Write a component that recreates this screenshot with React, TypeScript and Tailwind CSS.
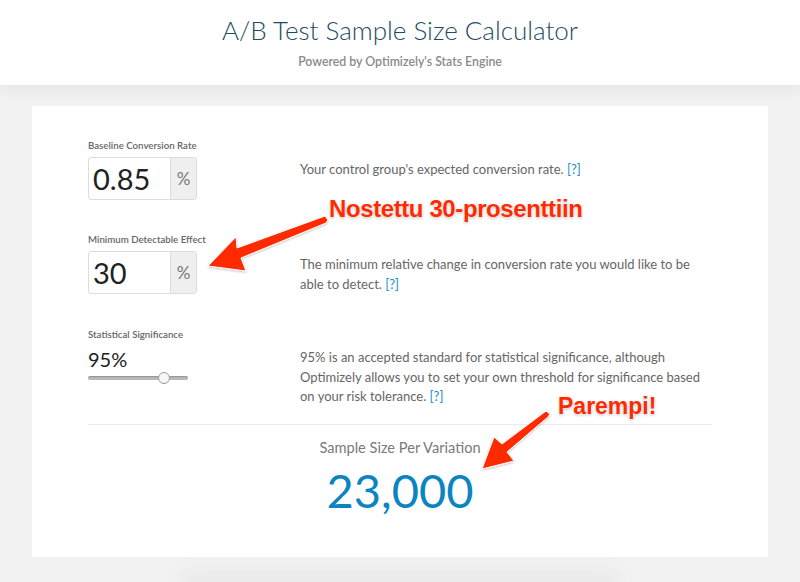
import React from "react";

const Help = () => <span className="text-[#1a8cc9]">[?]</span>;

const PercentInput = ({ value }: { value: string }) => (
  <div className="flex h-[43px] w-[109px] rounded-[3px] border border-[#dcdcdc] overflow-hidden">
    <div className="flex w-[81px] items-center pl-[4px] text-[29px] text-[#222]">{value}</div>
    <div className="flex flex-1 items-center justify-center border-l border-[#dcdcdc] bg-[#efefef] text-[17px] text-[#777]">
      %
    </div>
  </div>
);

const Label = ({ children }: { children: React.ReactNode }) => (
  <div className="text-[9.7px] leading-[11px] font-semibold text-[#666]">{children}</div>
);

export default function App() {
  return (
    <div className="relative min-h-[582px] w-full overflow-hidden bg-[#f2f2f2] font-['Lato',sans-serif]">
      <header className="relative z-10 flex h-[85px] flex-col items-center bg-white shadow-[0_4px_14px_rgba(0,0,0,0.06)]">
        <h1 className="mt-[15px] text-[26px] leading-[31px] font-light text-[#1d4c62]">
          A/B Test Sample Size Calculator
        </h1>
        <p className="mt-[9px] text-[12.3px] leading-[14px] font-semibold text-[#8a8a8a]">
          Powered by Optimizely's Stats Engine
        </p>
      </header>

      <main className="mx-[32px] mt-[21px] h-[451px] bg-white px-[56px] pt-[34px]">
        <div className="flex">
          <div className="w-[212px]">
            <Label>Baseline Conversion Rate</Label>
            <div className="mt-[6px]">
              <PercentInput value="0.85" />
            </div>
          </div>
          <p className="pt-[19px] text-[13px] leading-[20px] text-[#666]">
            Your control group's expected conversion rate. <Help />
          </p>
        </div>

        <div className="mt-[34px] flex">
          <div className="w-[212px]">
            <Label>Minimum Detectable Effect</Label>
            <div className="mt-[6px]">
              <PercentInput value="30" />
            </div>
          </div>
          <p className="pt-[20px] text-[13px] leading-[20px] text-[#666]">
            The minimum relative change in conversion rate you would like to be
            <br />
            able to detect. <Help />
          </p>
        </div>

        <div className="mt-[35px] flex">
          <div className="w-[212px]">
            <Label>Statistical Significance</Label>
            <div className="mt-[7px] text-[20px] leading-[24px] text-[#222]">95%</div>
            <div className="relative mt-[1px] h-[12px] w-[100px]">
              <div className="absolute top-[4px] h-[4px] w-full rounded-full bg-[#b9b9b9] shadow-[inset_0_1px_1px_rgba(0,0,0,0.2)]" />
              <div className="absolute top-0 left-[70px] h-[12px] w-[12px] rounded-full border border-[#9a9a9a] bg-[#f7f7f7]" />
            </div>
          </div>
          <p className="pt-[19px] text-[13px] leading-[19.5px] text-[#666]">
            95% is an accepted standard for statistical significance, although
            <br />
            Optimizely allows you to set your own threshold for significance based
            <br />
            on your risk tolerance. <Help />
          </p>
        </div>

        <div className="mt-[17px] border-t border-[#ebebeb]" />

        <div className="flex flex-col items-center">
          <div className="mt-[14px] text-[14.6px] leading-[17px] text-[#7a7a7a]">Sample Size Per Variation</div>
          <div className="mt-[10px] text-[47px] leading-[48px] text-[#0b85c2]">23,000</div>
        </div>
      </main>

      <div className="mx-auto mt-[14px] h-[20px] w-[440px] rounded-full bg-[#e9e9e9] blur-[8px]" />

      <svg className="pointer-events-none absolute top-0 left-0" width="800" height="582" viewBox="0 0 800 582">
        <defs>
          <filter id="sh" x="-20%" y="-20%" width="140%" height="140%">
            <feDropShadow dx="0" dy="1" stdDeviation="1" floodColor="#000" floodOpacity="0.25" />
          </filter>
        </defs>
        <polygon
          filter="url(#sh)"
          fill="#ff2a00"
          stroke="#fff"
          strokeWidth="1"
          strokeLinejoin="round"
          points="208,266 236,237 237,248 325,216 328,220 326,223 241,258 246,271"
        />
        <polygon
          filter="url(#sh)"
          fill="#ff2a00"
          stroke="#fff"
          strokeWidth="1"
          strokeLinejoin="round"
          points="482,469 494,437 502,444 546,411 550,414 548,417 507,452 514,461"
        />
      </svg>

      <div className="pointer-events-none absolute top-[197px] left-[329px] font-['Liberation_Sans',Arial,sans-serif] text-[24px] leading-[24px] font-bold tracking-[-0.4px] text-[#ff2a00] [text-shadow:0_0_2px_#fff,0_0_2px_#fff,0_1px_3px_rgba(0,0,0,0.35)]">
        Nostettu 30-prosenttiin
      </div>
      <div className="pointer-events-none absolute top-[394px] left-[558px] font-['Liberation_Sans',Arial,sans-serif] text-[23px] leading-[24px] font-bold text-[#ff2a00] [text-shadow:0_0_2px_#fff,0_0_2px_#fff,0_1px_3px_rgba(0,0,0,0.35)]">
        Parempi!
      </div>
    </div>
  );
}
